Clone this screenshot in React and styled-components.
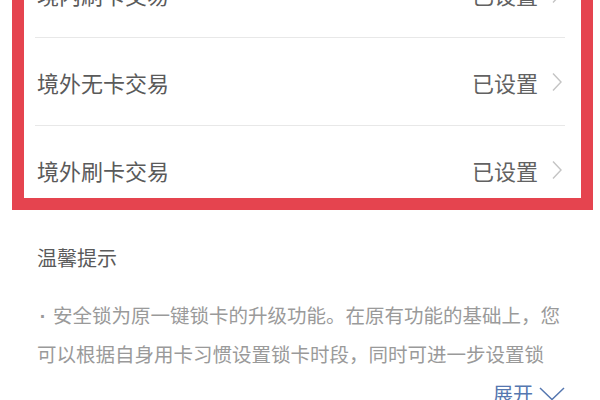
import React from 'react';
import styled, { createGlobalStyle } from 'styled-components';

const ROWS = [
    { label: '境内刷卡交易', value: '已设置' },
    { label: '境外无卡交易', value: '已设置' },
    { label: '境外刷卡交易', value: '已设置', cut: true },
];

const TIP_TEXT = '安全锁为原一键锁卡的升级功能。在原有功能的基础上，您可以根据自身用卡习惯设置锁卡时段，同时可进一步设置锁';

const App = () => {
    return (
        <>
            <GlobalStyle />
            <Page>
                <Frame>
                    {
                        ROWS.map((item, index) => {
                            return (
                                <Row key={index} $cut={item.cut} $last={index === ROWS.length - 1}>
                                    <Label>{item.label}</Label>
                                    <Value>
                                        {item.value}
                                        <svg width="12" height="20" viewBox="0 0 12 20">
                                            <path d="M2 1.5 L10 10 L2 18.5" fill="none" stroke="#c4c4c4" strokeWidth="1.4" />
                                        </svg>
                                    </Value>
                                </Row>
                            )
                        })
                    }
                </Frame>
                <Tips>
                    <TipsTitle>温馨提示</TipsTitle>
                    <TipsText><Bullet>·</Bullet>{TIP_TEXT}</TipsText>
                    <Expand>
                        展开
                        <svg width="26" height="14" viewBox="0 0 26 14">
                            <path d="M1 1 L13 12.5 L25 1" fill="none" stroke="#5577b0" strokeWidth="1.5" />
                        </svg>
                    </Expand>
                </Tips>
            </Page>
        </>
    )
};

export default App;

const GlobalStyle = createGlobalStyle`
    html, body{
        margin: 0;
        padding: 0;
        background: #fff;
        overflow: hidden;
    }
    body{
        font-family: "Noto Sans CJK SC", "Noto Sans", sans-serif;
    }
`;

const Page = styled.div`
    width: 600px;
    height: 450px;
    margin-top: -50px;
    overflow: hidden;
`;

const Frame = styled.div`
    box-sizing: border-box;
    margin-left: 12px;
    width: 581px;
    border: 12px solid #e5444f;
    border-top: none;
    padding: 0 16px 0 11px;
    background: #fff;
`;

const Row = styled.div`
    height: ${p => p.$cut ? '72px' : '88px'};
    display: flex;
    justify-content: space-between;
    align-items: ${p => p.$cut ? 'flex-end' : 'center'};
    padding: ${p => p.$cut ? '0 2px 13px 2px' : '0 2px'};
    box-sizing: border-box;
    border-bottom: ${p => p.$last ? 'none' : '1px solid #e8e8e8'};
`;

const Label = styled.div`
    font-size: 22px;
    line-height: 30px;
    color: #5a5a5a;
`;

const Value = styled.div`
    display: flex;
    align-items: center;
    gap: 13px;
    font-size: 22px;
    line-height: 30px;
    color: #626262;
    svg{
        display: block;
    }
`;

const Tips = styled.div`
    padding: 34px 35px 0 37px;
`;

const TipsTitle = styled.div`
    font-size: 20px;
    line-height: 28px;
    color: #5a5a5a;
`;

const TipsText = styled.div`
    width: 526px;
    margin-top: 24px;
    font-size: 19.5px;
    line-height: 37px;
    color: #9a9a9a;
`;

const Bullet = styled.span`
    display: inline-block;
    width: 10px;
    margin: 0 5px 0 1px;
    font-family: "Liberation Sans", sans-serif;
    font-weight: bold;
    text-align: center;
`;

const Expand = styled.div`
    margin-top: 8px;
    display: flex;
    justify-content: flex-end;
    align-items: center;
    gap: 6px;
    font-size: 20px;
    line-height: 28px;
    color: #5577b0;
`;
